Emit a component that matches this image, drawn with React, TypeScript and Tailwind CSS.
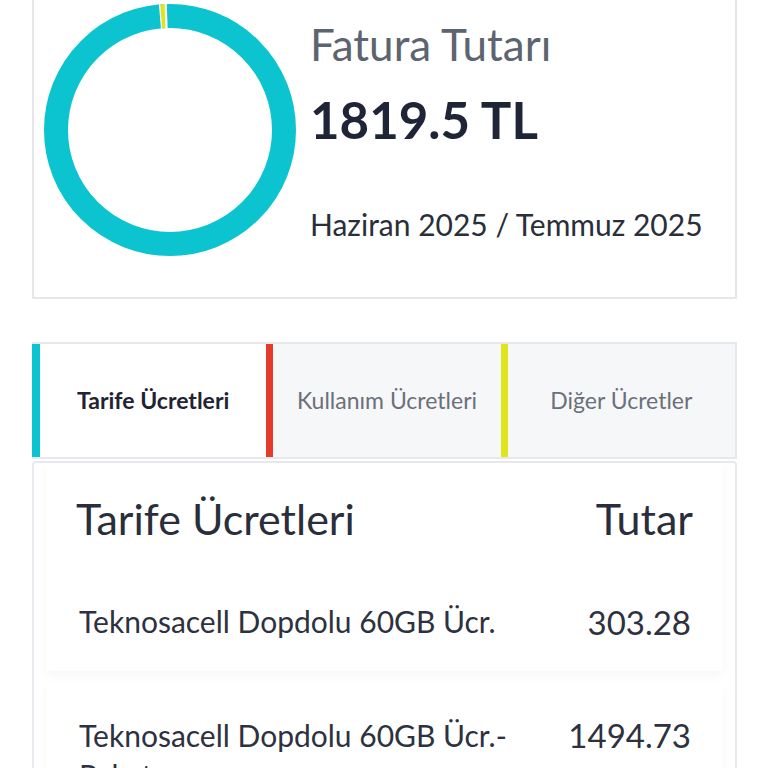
import React from "react";

const CX = 126;
const CY = 126;

function pt(r: number, deg: number) {
  const a = ((deg - 90) * Math.PI) / 180;
  return [CX + r * Math.cos(a), CY + r * Math.sin(a)];
}

function arc(r: number, a0: number, a1: number) {
  const [x0, y0] = pt(r, a0);
  const [x1, y1] = pt(r, a1);
  const large = a1 - a0 > 180 ? 1 : 0;
  return `M ${x0} ${y0} A ${r} ${r} 0 ${large} 1 ${x1} ${y1}`;
}

function radial(deg: number) {
  const [x0, y0] = pt(100, deg);
  const [x1, y1] = pt(128, deg);
  return { x1: x0, y1: y0, x2: x1, y2: y1 };
}

function Donut() {
  const l1 = radial(-4.75);
  const l2 = radial(-1.95);
  return (
    <svg width="252" height="252" viewBox="0 0 252 252" className="block shrink-0">
      <circle cx={CX} cy={CY} r={114} fill="none" stroke="#0cc4cf" strokeWidth={24} />
      <path d={arc(114, -4.8, -2.2)} fill="none" stroke="#dfe41c" strokeWidth={24} />
      <line {...l1} stroke="#ffffff" strokeWidth={1.2} />
      <line {...l2} stroke="#ffffff" strokeWidth={2.2} />
    </svg>
  );
}

const font = { fontFamily: "Lato, 'Noto Sans', sans-serif" };

export default function App() {
  return (
    <div className="min-h-[768px] bg-white overflow-hidden" style={font}>
      <div className="ml-[32px] mr-[31px] h-[299px] border-x-2 border-b-2 border-[#e6e7ea] flex items-start">
        <div className="ml-[10px] mt-[4px]">
          <Donut />
        </div>
        <div className="ml-[14px] flex flex-col">
          <div className="mt-[19px] text-[44px] leading-[50px] text-[#5d6470] whitespace-nowrap">Fatura Tutarı</div>
          <div className="mt-[21px] text-[51px] leading-[60px] font-bold text-[#1f2437] whitespace-nowrap">1819.5 TL</div>
          <div className="mt-[56px] text-[30px] leading-[36px] text-[#2a2e39] whitespace-nowrap">Haziran 2025 / Temmuz 2025</div>
        </div>
      </div>

      <div className="ml-[32px] mr-[31px] mt-[43px] h-[117px] border-y-2 border-r-2 border-[#e6e8ec] flex">
        <div className="flex-1 flex bg-white">
          <div className="w-[8px] bg-[#0cc4cf]" />
          <div className="flex-1 flex items-center justify-center text-[23px] font-bold text-[#1f2333]">Tarife Ücretleri</div>
        </div>
        <div className="flex-1 flex bg-[#f6f7f9]">
          <div className="w-[7px] bg-[#e63b2b]" />
          <div className="flex-1 flex items-center justify-center text-[23px] text-[#6b7079]">Kullanım Ücretleri</div>
        </div>
        <div className="flex-1 flex bg-[#f6f7f9]">
          <div className="w-[7px] bg-[#dfe41c]" />
          <div className="flex-1 flex items-center justify-center text-[23px] text-[#6b7079]">Diğer Ücretler</div>
        </div>
      </div>

      <div className="ml-[32px] mr-[31px] mt-[2px] border-2 border-[#e7e9ee] rounded-[4px] bg-white px-[12px] flex flex-col gap-[12px]">
        <div className="bg-white flex flex-col px-[30px] pt-[31px] pb-[29px] shadow-[0_4px_10px_rgba(0,0,0,0.035)]">
          <div className="flex items-center justify-between">
            <div className="text-[43px] leading-[50px] text-[#2a2e3c]">Tarife Ücretleri</div>
            <div className="text-[43px] leading-[50px] text-[#2a2e3c]">Tutar</div>
          </div>
          <div className="mt-[56px] flex items-center justify-between pl-[3px] pr-[2px]">
            <div className="text-[30px] leading-[38px] text-[#2d3140]">Teknosacell Dopdolu 60GB Ücr.</div>
            <div className="text-[33px] leading-[40px] text-[#2d3140] mt-[2px]">303.28</div>
          </div>
        </div>
        <div className="bg-white flex items-start justify-between pl-[33px] pr-[32px] pt-[32px] pb-[30px] shadow-[0_4px_10px_rgba(0,0,0,0.035)]">
          <div className="text-[30px] leading-[40px] text-[#2d3140] w-[450px]">Teknosacell Dopdolu 60GB Ücr.- Paket</div>
          <div className="text-[33px] leading-[40px] text-[#2d3140]">1494.73</div>
        </div>
      </div>
    </div>
  );
}
